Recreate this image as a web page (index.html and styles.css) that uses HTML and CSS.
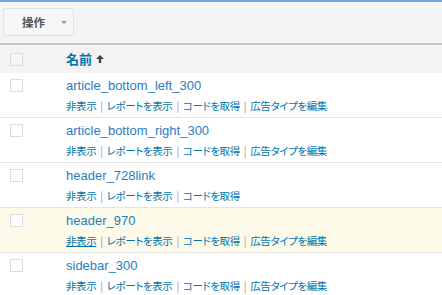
FILE: index.html
```html
<!DOCTYPE html>
<html lang="ja">
<head>
    <meta charset="UTF-8">
    <title>広告ユニット</title>
    <link rel="stylesheet" href="styles.css">
</head>
<body>

<div class="toolbar">
    <div class="bulk-btn">
        <span class="bulk-label">操作</span>
        <span class="caret"></span>
    </div>
</div>

<div class="table">
    <div class="head-row">
        <div class="check-col"><span class="checkbox"></span></div>
        <div class="name-col">
            <span class="sort-title">名前</span>
            <svg class="sort-arrow" width="8" height="8" viewBox="0 0 8 8">
                <path d="M4 0 L8 4 L5.2 4 L5.2 8 L2.8 8 L2.8 4 L0 4 Z" fill="#444"/>
            </svg>
        </div>
    </div>

    <div class="row">
        <div class="check-col"><span class="checkbox"></span></div>
        <div class="name-col">
            <a class="row-title">article_bottom_left_300</a>
            <div class="actions">
                <a>非表示</a><span class="sep">|</span><a>レポートを表示</a><span class="sep">|</span><a>コードを取得</a><span class="sep">|</span><a>広告タイプを編集</a>
            </div>
        </div>
    </div>

    <div class="row">
        <div class="check-col"><span class="checkbox"></span></div>
        <div class="name-col">
            <a class="row-title">article_bottom_right_300</a>
            <div class="actions">
                <a>非表示</a><span class="sep">|</span><a>レポートを表示</a><span class="sep">|</span><a>コードを取得</a><span class="sep">|</span><a>広告タイプを編集</a>
            </div>
        </div>
    </div>

    <div class="row">
        <div class="check-col"><span class="checkbox"></span></div>
        <div class="name-col">
            <a class="row-title">header_728link</a>
            <div class="actions">
                <a>非表示</a><span class="sep">|</span><a>レポートを表示</a><span class="sep">|</span><a>コードを取得</a>
            </div>
        </div>
    </div>

    <div class="row hover">
        <div class="check-col"><span class="checkbox"></span></div>
        <div class="name-col">
            <a class="row-title">header_970</a>
            <div class="actions">
                <a class="focus">非表示</a><span class="sep">|</span><a>レポートを表示</a><span class="sep">|</span><a>コードを取得</a><span class="sep">|</span><a>広告タイプを編集</a>
            </div>
        </div>
    </div>

    <div class="row">
        <div class="check-col"><span class="checkbox"></span></div>
        <div class="name-col">
            <a class="row-title">sidebar_300</a>
            <div class="actions">
                <a>非表示</a><span class="sep">|</span><a>レポートを表示</a><span class="sep">|</span><a>コードを取得</a><span class="sep">|</span><a>広告タイプを編集</a>
            </div>
        </div>
    </div>
</div>

</body>
</html>
```

FILE: styles.css
```css
body {
    margin: 0;
    font-family: 'Liberation Sans', Arial, 'Noto Sans CJK JP', sans-serif;
    background: #fff;
    color: #333;
}
.toolbar {
    background: #f4f4f4;
    border-top: 2px solid #6fa8dc;
    border-bottom: 2px solid #c4c4c4;
    height: 45px;
    padding: 6px 0 0 3px;
    box-sizing: border-box;
}
.bulk-btn {
    width: 71px;
    height: 28px;
    box-sizing: border-box;
    border: 1px solid #e2e2e2;
    border-radius: 3px;
    background: #f7f7f7;
    display: flex;
    align-items: center;
    padding-left: 18px;
}
.bulk-label {
    font-family: 'Noto Sans CJK JP', sans-serif;
    font-size: 11.5px;
    font-weight: bold;
    color: #555;
}
.caret {
    margin-left: 16px;
    width: 0;
    height: 0;
    border-left: 3px solid transparent;
    border-right: 3px solid transparent;
    border-top: 3px solid #999;
}
.head-row {
    display: flex;
    align-items: center;
    height: 28px;
    background: #f3f3f3;
}
.check-col {
    width: 66px;
    padding-left: 10px;
    box-sizing: border-box;
    flex: none;
}
.checkbox {
    display: block;
    width: 13px;
    height: 13px;
    box-sizing: border-box;
    border: 1px solid #dcdcdc;
    background: #fff;
}
.head-row .checkbox {
    background: #f6f6f6;
}
.name-col {
    display: flex;
    flex-direction: column;
}
.head-row .name-col {
    flex-direction: row;
    align-items: center;
}
.sort-title {
    font-family: 'Noto Sans CJK JP', sans-serif;
    font-weight: bold;
    font-size: 13px;
    color: #0073aa;
    line-height: 16px;
}
.sort-arrow {
    margin-left: 4px;
}
.row {
    display: flex;
    align-items: flex-start;
    height: 45px;
    box-sizing: border-box;
    border-bottom: 1px solid #e5e5e5;
}
.row.hover {
    background: #fcf9e8;
}
.row .check-col {
    padding-top: 6px;
}
.row-title {
    font-size: 13px;
    line-height: 20px;
    padding-top: 3px;
    color: #2a7cbf;
}
.actions {
    font-family: 'Noto Sans CJK JP', sans-serif;
    font-feature-settings: "palt";
    font-size: 10.5px;
    letter-spacing: -0.4px;
    line-height: 16px;
    margin-top: 2px;
    color: #0073aa;
}
.actions a {
    color: #0073aa;
}
.actions a.focus {
    text-decoration: underline;
}
.sep {
    color: #999;
    margin: 0 4px;
}
```
